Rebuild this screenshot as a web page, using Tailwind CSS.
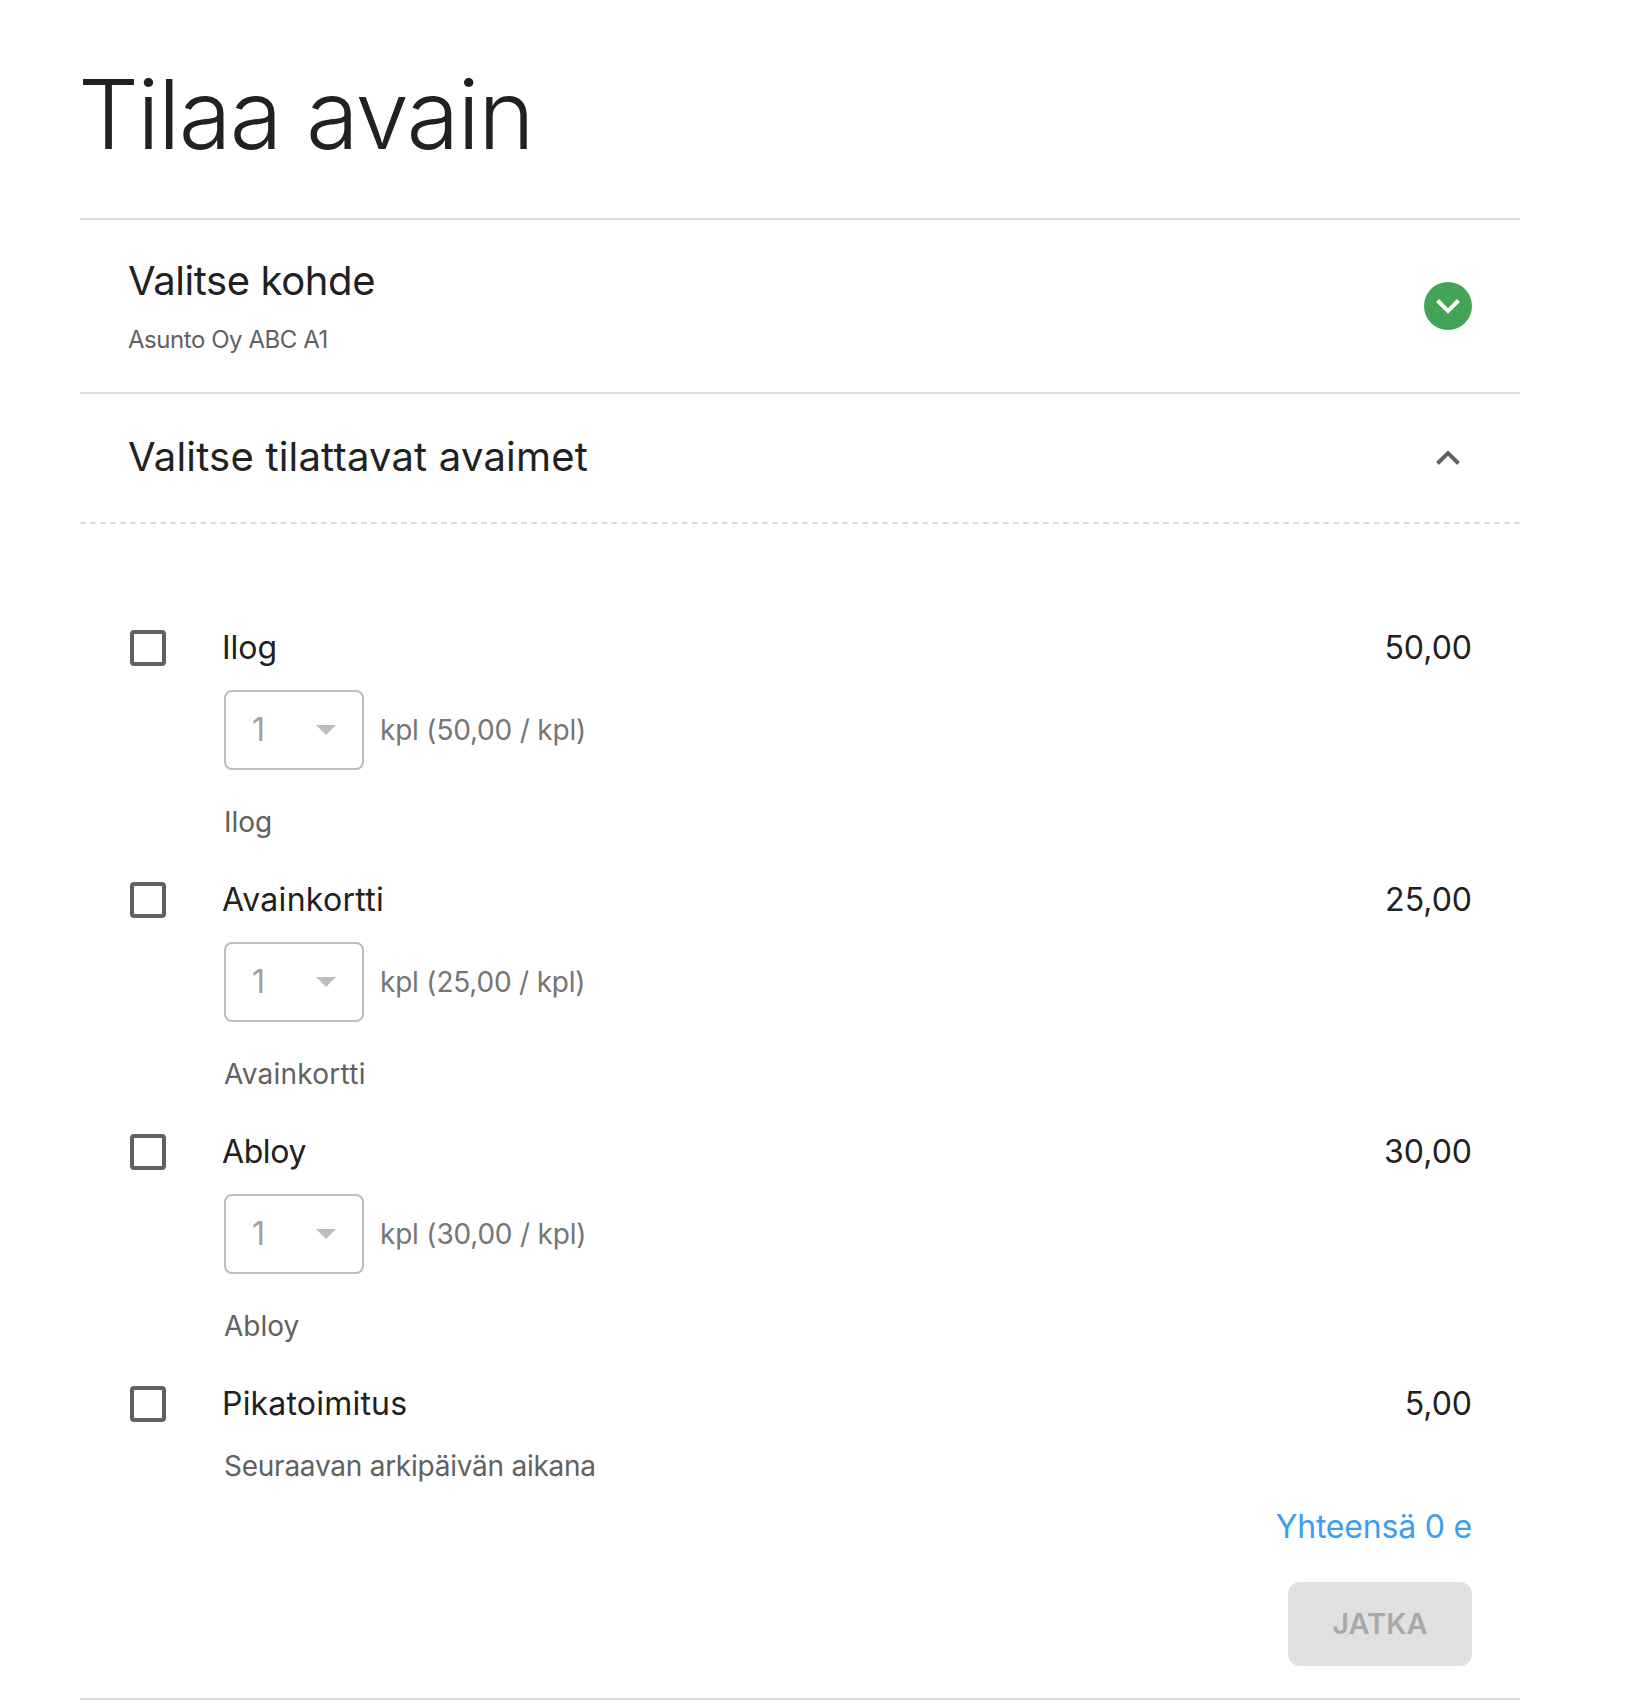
<!DOCTYPE html>
<html lang="fi">
<head>
<meta charset="utf-8">
<script src="https://cdn.jsdelivr.net/npm/@tailwindcss/browser@4"></script>
<title>Tilaa avain</title>
</head>
<body class="bg-white font-['Inter',sans-serif] text-[#212121] overflow-hidden">
<main class="w-[1440px] ml-[80px] h-[1702px]">
  <h1 class="h-[218px] pt-[60px] -ml-[2px] text-[96px] leading-[108px] font-light tracking-[-1.7px] box-border">Tilaa avain</h1>
  <section class="border-t-2 border-[#d9d9d9] h-[174px] px-[48px] flex items-center justify-between">
    <div>
      <h2 class="text-[40px] leading-[48px] mb-[20px] tracking-[-0.4px]">Valitse kohde</h2>
      <p class="text-[24px] leading-[30px] text-[#616161] tracking-[-0.45px]">Asunto Oy ABC A1</p>
    </div>
    <span class="w-[48px] h-[48px] rounded-full bg-[#43a357] flex items-center justify-center">
      <svg width="24" height="16" viewBox="0 0 24 16" fill="none" stroke="#fff" stroke-width="4"><path d="M1.5 2.5 12 13 22.5 2.5"/></svg>
    </span>
  </section>
  <section class="border-t-2 border-[#d9d9d9] h-[130px] px-[48px] flex items-center justify-between">
    <h2 class="text-[40px] leading-[48px] tracking-[0.2px] -mt-[2px]">Valitse tilattavat avaimet</h2>
    <span class="w-[48px] flex justify-center">
      <svg width="24" height="16" viewBox="0 0 24 16" fill="none" stroke="#616161" stroke-width="4"><path d="M1.5 13.5 12 3 22.5 13.5"/></svg>
    </span>
  </section>
  <div class="border-t-2 border-dashed border-[#d9d9d9] px-[48px] pt-[106px]">

    <div class="h-[252px]">
      <div class="flex items-center justify-between h-[36px]">
        <div class="flex items-center gap-[56px] pl-[2px]">
          <span class="block w-[36px] h-[36px] border-[4px] border-[#616161] rounded-[4px]"></span>
          <span class="text-[32px] leading-[36px]">Ilog</span>
        </div>
        <span class="text-[32px] leading-[36px]">50,00</span>
      </div>
      <div class="flex items-center mt-[24px] ml-[96px] gap-[16px]">
        <div class="w-[140px] h-[80px] border-2 border-[#bdbdbd] rounded-[8px] flex items-center justify-between pl-[26px] pr-[26px]">
          <span class="text-[32px] text-[#9e9e9e]">1</span>
          <svg width="20" height="10" viewBox="0 0 20 10"><path d="M0 0H20L10 10Z" fill="#bdbdbd"/></svg>
        </div>
        <span class="text-[28px] leading-[36px] text-[#757575] tracking-[-0.2px]">kpl (50,00 / kpl)</span>
      </div>
      <p class="ml-[96px] mt-[34px] text-[28px] leading-[36px] text-[#616161]">Ilog</p>
    </div>

    <div class="h-[252px]">
      <div class="flex items-center justify-between h-[36px]">
        <div class="flex items-center gap-[56px] pl-[2px]">
          <span class="block w-[36px] h-[36px] border-[4px] border-[#616161] rounded-[4px]"></span>
          <span class="text-[32px] leading-[36px] tracking-[0.3px]">Avainkortti</span>
        </div>
        <span class="text-[32px] leading-[36px]">25,00</span>
      </div>
      <div class="flex items-center mt-[24px] ml-[96px] gap-[16px]">
        <div class="w-[140px] h-[80px] border-2 border-[#bdbdbd] rounded-[8px] flex items-center justify-between pl-[26px] pr-[26px]">
          <span class="text-[32px] text-[#9e9e9e]">1</span>
          <svg width="20" height="10" viewBox="0 0 20 10"><path d="M0 0H20L10 10Z" fill="#bdbdbd"/></svg>
        </div>
        <span class="text-[28px] leading-[36px] text-[#757575] tracking-[-0.2px]">kpl (25,00 / kpl)</span>
      </div>
      <p class="ml-[96px] mt-[34px] text-[28px] leading-[36px] text-[#616161] tracking-[0.25px]">Avainkortti</p>
    </div>

    <div class="h-[252px]">
      <div class="flex items-center justify-between h-[36px]">
        <div class="flex items-center gap-[56px] pl-[2px]">
          <span class="block w-[36px] h-[36px] border-[4px] border-[#616161] rounded-[4px]"></span>
          <span class="text-[32px] leading-[36px] tracking-[-0.4px]">Abloy</span>
        </div>
        <span class="text-[32px] leading-[36px]">30,00</span>
      </div>
      <div class="flex items-center mt-[24px] ml-[96px] gap-[16px]">
        <div class="w-[140px] h-[80px] border-2 border-[#bdbdbd] rounded-[8px] flex items-center justify-between pl-[26px] pr-[26px]">
          <span class="text-[32px] text-[#9e9e9e]">1</span>
          <svg width="20" height="10" viewBox="0 0 20 10"><path d="M0 0H20L10 10Z" fill="#bdbdbd"/></svg>
        </div>
        <span class="text-[28px] leading-[36px] text-[#757575] tracking-[-0.2px]">kpl (30,00 / kpl)</span>
      </div>
      <p class="ml-[96px] mt-[34px] text-[28px] leading-[36px] text-[#616161]">Abloy</p>
    </div>

    <div class="flex items-center justify-between h-[36px]">
      <div class="flex items-center gap-[56px] pl-[2px]">
        <span class="block w-[36px] h-[36px] border-[4px] border-[#616161] rounded-[4px]"></span>
        <span class="text-[32px] leading-[36px] tracking-[0.2px]">Pikatoimitus</span>
      </div>
      <span class="text-[32px] leading-[36px]">5,00</span>
    </div>
    <p class="ml-[96px] mt-[26px] text-[28px] leading-[36px] text-[#616161] tracking-[-0.25px]">Seuraavan arkipäivän aikana</p>
    <p class="text-right mt-[19px] text-[32px] leading-[48px] text-[#3c9df2] tracking-[-0.2px]">Yhteensä 0 e</p>
    <div class="flex justify-end mt-[31px]">
      <span class="w-[184px] h-[84px] rounded-[12px] bg-[#e0e0e0] text-[#a8a8a8] text-[29px] font-semibold flex items-center justify-center">JATKA</span>
    </div>
  </div>
  <div class="border-t-2 border-[#d9d9d9] mt-[32px]"></div>
</main>
</body>
</html>
